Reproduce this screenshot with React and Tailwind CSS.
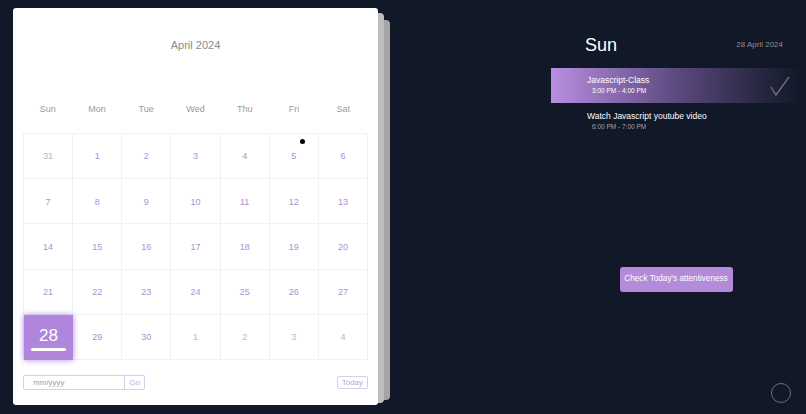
const weekDays = ["Sun", "Mon", "Tue", "Wed", "Thu", "Fri", "Sat"];

const days = [
  [31, false], [1, true], [2, true], [3, true], [4, true], [5, true], [6, true],
  [7, true], [8, true], [9, true], [10, true], [11, true], [12, true], [13, true],
  [14, true], [15, true], [16, true], [17, true], [18, true], [19, true], [20, true],
  [21, true], [22, true], [23, true], [24, true], [25, true], [26, true], [27, true],
  [28, true], [29, true], [30, true], [1, false], [2, false], [3, false], [4, false],
];

const events = [
  { title: "Javascript-Class", time: "3:00 PM - 4:00 PM", active: true },
  { title: "Watch Javascript youtube video", time: "6:00 PM - 7:00 PM", active: false },
];

function DayCell({ day, current, index }) {
  if (current && day === 28) {
    return (
      <div className="relative flex flex-col items-center justify-center bg-[#b086dc] shadow-[0_0_6px_#b086dc] z-10">
        <span className="text-[17px] leading-none text-white mt-[3px]">28</span>
        <span className="mt-[4px] h-[3px] w-[35px] bg-white rounded-full" />
      </div>
    );
  }
  return (
    <div className="relative flex items-center justify-center border-r border-b border-[#f1f1f3] pt-[2px]">
      <span className={`text-[9px] ${current ? "text-[#ab90d6]" : "text-[#b8b8b8]"}`}>{day}</span>
      {index === 5 && (
        <span className="absolute top-[5px] left-[30px] h-[5px] w-[5px] rounded-full bg-black" />
      )}
    </div>
  );
}

function Calendar() {
  return (
    <div className="relative w-[365px] h-[397px]">
      <div className="absolute left-[6px] top-[12px] w-[365px] h-[380px] bg-[#a4a4a4] rounded-sm translate-x-[6px]" />
      <div className="absolute left-[6px] top-[5px] w-[365px] h-[390px] bg-[#bdbdbd] rounded-sm" />
      <div className="relative w-[365px] h-[397px] bg-white rounded-[3px] px-[10px] flex flex-col">
        <div className="h-[74px] flex items-center justify-center text-[11px] text-[#8a8a8a]">
          April 2024
        </div>
        <div className="h-[51px] grid grid-cols-7 items-center pt-[4px]">
          {weekDays.map((d) => (
            <div key={d} className="text-center text-[9px] text-[#9b9b9b]">{d}</div>
          ))}
        </div>
        <div className="h-[227px] grid grid-cols-7 grid-rows-5 border-t border-l border-[#f1f1f3]">
          {days.map(([d, cur], i) => (
            <DayCell key={i} day={d} current={cur} index={i} />
          ))}
        </div>
        <div className="mt-[15px] flex items-center justify-between">
          <div className="flex h-[15px] w-[122px] border border-[#d9cbef] rounded-[2px] items-center">
            <span className="flex-1 pl-[9px] text-[8px] text-[#a0a0a0]">mm/yyyy</span>
            <span className="h-full w-[20px] border-l border-[#d9cbef] text-[8px] text-[#c3aee5] flex items-center justify-center">Go</span>
          </div>
          <button className="h-[13px] px-[4px] border border-[#d9cbef] rounded-[2px] text-[8px] text-[#b9a6dc] leading-none">
            Today
          </button>
        </div>
      </div>
    </div>
  );
}

function Check() {
  return (
    <svg width="22" height="22" viewBox="0 0 22 22" fill="none" stroke="#70707f" strokeWidth="1.3">
      <path d="M2 12 L7 20 L20 2" />
    </svg>
  );
}

export default function App() {
  return (
    <div className="relative h-[414px] w-[806px] bg-[#111827] flex justify-between overflow-hidden" style={{ fontFamily: '"Liberation Sans", Arial, sans-serif' }}>
      <div className="pl-[13px] pt-[8px]">
        <Calendar />
      </div>

      <div className="w-[250px] mr-[5px] flex flex-col">
        <div className="mt-[34px] h-[22px] flex items-center justify-between pl-[34px] pr-[18px]">
          <span className="text-[18px] text-white">Sun</span>
          <span className="text-[8px] text-[#8f8f9a]">28 April 2024</span>
        </div>
        <div className="mt-[12px] flex flex-col">
          {events.map((e) => (
            <div
              key={e.title}
              className={`h-[35px] flex items-center justify-between pl-[36px] pr-[10px] ${e.active ? "bg-linear-to-r from-[#ba8fe2] via-[#5d4a80] to-[#111827]" : "pt-[2px]"}`}
            >
              <div className="flex flex-col">
                <span className="text-[8.5px] text-white leading-[11px]">{e.title}</span>
                <span className={`text-[6.5px] leading-[10px] pl-[5px] ${e.active ? "text-white" : "text-[#a3a3ad]"}`}>{e.time}</span>
              </div>
              {e.active && <Check />}
            </div>
          ))}
        </div>
        <div className="mt-[129px] flex justify-center">
          <button className="h-[25px] w-[113px] rounded-[3px] bg-[#b48ada] text-white text-[8.2px]">
            Check Today's attentiveness
          </button>
        </div>
      </div>

      <div className="absolute right-[15px] bottom-[11px] h-[20px] w-[20px] rounded-full border border-[#6b7080]" />
    </div>
  );
}
